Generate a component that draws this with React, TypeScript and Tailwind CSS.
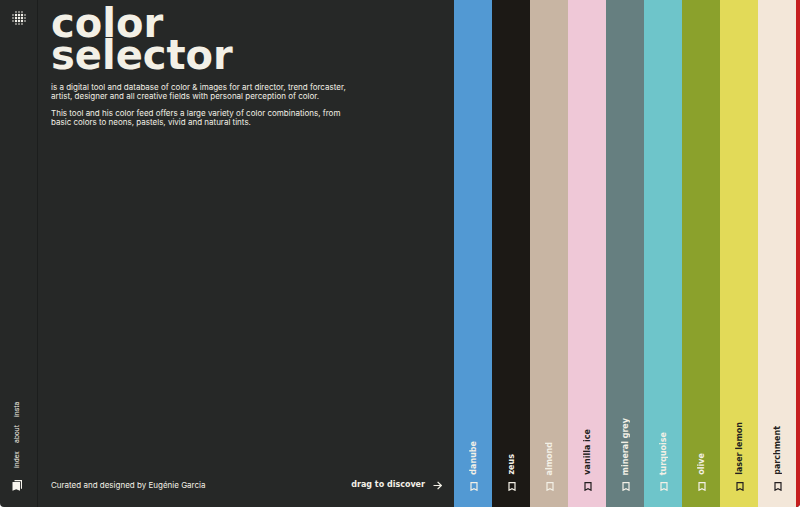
import React from "react";

type Swatch = { name: string; bg: string; text: string };

const swatches: Swatch[] = [
  { name: "danube", bg: "bg-[#5299d3]", text: "text-[#f3f0e6]" },
  { name: "zeus", bg: "bg-[#1c1915]", text: "text-[#f3f0e6]" },
  { name: "almond", bg: "bg-[#c8b5a3]", text: "text-[#f3f0e6]" },
  { name: "vanilla ice", bg: "bg-[#efc8d7]", text: "text-[#231f20]" },
  { name: "mineral grey", bg: "bg-[#667f80]", text: "text-[#f3f0e6]" },
  { name: "turquoise", bg: "bg-[#6ec5ca]", text: "text-[#f3f0e6]" },
  { name: "olive", bg: "bg-[#8ba12c]", text: "text-[#f3f0e6]" },
  { name: "laser lemon", bg: "bg-[#e2da58]", text: "text-[#231f20]" },
  { name: "parchment", bg: "bg-[#f3e7d9]", text: "text-[#231f20]" },
];

const dotSteps = [1, 4, 7, 10, 13];

function DotLogo() {
  return (
    <svg viewBox="0 0 14 14" className="size-3.5" fill="#f7f5ee" aria-hidden="true">
      {dotSteps.map((y) =>
        dotSteps.map((x) => {
          const outer = (x === 1 || x === 13 ? 1 : 0) + (y === 1 || y === 13 ? 1 : 0);
          if (outer === 2) return null;
          return <circle key={`${x}-${y}`} cx={x} cy={y} r={outer ? 0.8 : 1.2} />;
        }),
      )}
    </svg>
  );
}

function Bookmark() {
  return (
    <svg viewBox="0 0 8 9" className="h-[9px] w-2" fill="none" stroke="currentColor" strokeWidth="1.2" aria-hidden="true">
      <path d="M1 .7H7V8.2L4 6.6L1 8.2Z" />
    </svg>
  );
}

function SavedIcon() {
  return (
    <svg viewBox="0 0 10 11" className="h-[11px] w-2.5" fill="#f7f5ee" aria-hidden="true">
      <path d="M2.5 0H10V9L8.9 8.4V1.2H2.5Z" />
      <path d="M.5 2H8V10.8L4.2 9.2L.5 10.8Z" />
    </svg>
  );
}

export default function App() {
  return (
    <div className="h-screen bg-white">
      <div className="flex h-full overflow-hidden rounded-b-[4px] bg-[#262827] font-['DejaVu_Sans',sans-serif] text-[#f3f0e6]">
        <nav className="flex w-[38px] shrink-0 flex-col items-center justify-between border-r border-[#1c1e1d] pt-[11px] pb-4">
          <a href="#home" aria-label="Home">
            <DotLogo />
          </a>
          <div className="flex flex-col items-center gap-3 pr-1">
            <div className="flex rotate-180 gap-2 font-['Roboto',sans-serif] text-[7px] leading-[10px] [writing-mode:vertical-rl]">
              <a href="#index">index</a>
              <a href="#about">about</a>
              <a href="#insta">insta</a>
            </div>
            <button type="button" aria-label="Saved colors">
              <SavedIcon />
            </button>
          </div>
        </nav>

        <main className="flex min-w-0 flex-1 flex-col justify-between pt-[7px] pr-3 pb-4 pl-[13px]">
          <header>
            <h1 className="text-[40px] leading-8 font-bold">
              color
              <br />
              selector
            </h1>
            <div className="mt-3 flex flex-col gap-2 font-['Inter',sans-serif] text-[8px] leading-[9px]">
              <p>
                is a digital tool and database of color &amp; images for art director, trend forcaster,
                <br />
                artist, designer and all creative fields with personal perception of color.
              </p>
              <p>
                This tool and his color feed offers a large variety of color combinations, from
                <br />
                basic colors to neons, pastels, vivid and natural tints.
              </p>
            </div>
          </header>
          <footer className="flex items-center justify-between text-[8px] leading-3">
            <p className="font-['Inter',sans-serif]">Curated and designed by Eugénie Garcia</p>
            <button type="button" className="flex items-center gap-2 font-bold">
              drag to discover
              <svg viewBox="0 0 9 9" className="size-[9px]" fill="none" stroke="currentColor" strokeWidth="1.2" aria-hidden="true">
                <path d="M.5 4.5H8.2M4.6 .8L8.3 4.5L4.6 8.2" />
              </svg>
            </button>
          </footer>
        </main>

        <section aria-label="Colors" className="flex shrink-0">
          {swatches.map((s) => (
            <button
              key={s.name}
              type="button"
              className={`flex w-[38px] flex-col items-center justify-end gap-[7px] pb-4 pl-0.5 ${s.bg} ${s.text}`}
            >
              <span className="rotate-180 text-[8px] leading-[10px] font-bold whitespace-nowrap [writing-mode:vertical-rl]">
                {s.name}
              </span>
              <Bookmark />
            </button>
          ))}
          <div className="w-1 bg-[#c61f1f]" />
        </section>
      </div>
    </div>
  );
}
